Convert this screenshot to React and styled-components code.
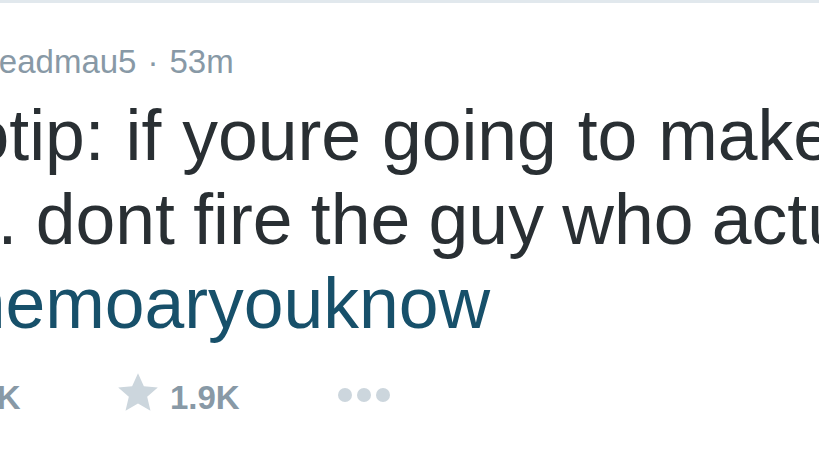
import React from "react";
import styled, { createGlobalStyle } from "styled-components";

const Global = createGlobalStyle`
  html, body { margin: 0; padding: 0; background: #ffffff; }
  body { overflow: hidden; font-family: "Liberation Sans", Arial, sans-serif; }
`;

const Page = styled.div`
  width: 819px;
  height: 452px;
  overflow: hidden;
  border-top: 3px solid #e1e8ed;
  box-sizing: border-box;
  background: #fff;
`;

const Tweet = styled.div`
  margin-left: ${(p) => p.$offset}px;
  display: flex;
  flex-direction: column;
`;

const Header = styled.div`
  margin-top: 39px;
  margin-left: ${(p) => p.$indent}px;
  height: 40px;
  line-height: 40px;
  font-size: 33px;
  color: #8899a6;
  white-space: nowrap;
`;

const Sep = styled.span`
  padding: 0 11px;
`;

const Text = styled.p`
  margin: 11px 0 0;
  font-size: 71.5px;
  line-height: 84px;
  color: #292f33;
  white-space: nowrap;
`;

const Line = styled.span`
  display: block;
  word-spacing: ${(p) => p.$ws || 0}px;
`;

const Hashtag = styled.span`
  color: #17506a;
`;

const Actions = styled.div`
  margin-top: 31px;
  margin-left: ${(p) => p.$indent}px;
  display: flex;
  align-items: center;
  height: 44px;
`;

const Action = styled.div`
  display: flex;
  align-items: center;
  gap: 10px;
  flex: none;
  width: ${(p) => p.$w}px;
  color: #8899a6;
  font-weight: bold;
  font-size: 33px;
`;

const Icon = styled.svg`
  flex: none;
  transform: translateY(${(p) => p.$shift || 0}px);
`;

const Dots = styled.div`
  display: flex;
  gap: 5px;
  transform: translateY(-3px);
`;

const Dot = styled.span`
  width: 14px;
  height: 14px;
  border-radius: 50%;
  background: #ccd6dd;
`;

const Star = () => (
  <Icon width="44" height="44" viewBox="0 0 24 24" $shift={-5}>
    <path
      fill="#ccd6dd"
      d="M12 1.2l3.2 7.1 7.6.7-5.8 5.1 1.8 7.6L12 17.7l-6.8 4 1.8-7.6L1.2 9l7.6-.7z"
    />
  </Icon>
);

const Retweet = () => (
  <Icon width="44" height="44" viewBox="0 0 24 24" $shift={-3}>
    <path
      fill="none"
      stroke="#ccd6dd"
      strokeWidth="2.6"
      d="M5 17V8h11M13 5l3 3-3 3M19 7v9H8M11 19l-3-3 3-3"
    />
  </Icon>
);

export default function App() {
  return (
    <>
      <Global />
      <Page>
        <Tweet $offset={-94}>
          <Header $indent={41}>
            @deadmau5<Sep>·</Sep>53m
          </Header>
          <Text>
            <Line $ws={1}>protip: if youre going to make a movie about your</Line>
            <Line $ws={-1.5}>life. dont fire the guy who actually made it</Line>
            <Line>
              <Hashtag>#themoaryouknow</Hashtag>
            </Line>
          </Text>
          <Actions $indent={-9}>
            <Action $w={219}>
              <Retweet />
              1.2K
            </Action>
            <Action $w={222}>
              <Star />
              1.9K
            </Action>
            <Dots>
              <Dot />
              <Dot />
              <Dot />
            </Dots>
          </Actions>
        </Tweet>
      </Page>
    </>
  );
}
